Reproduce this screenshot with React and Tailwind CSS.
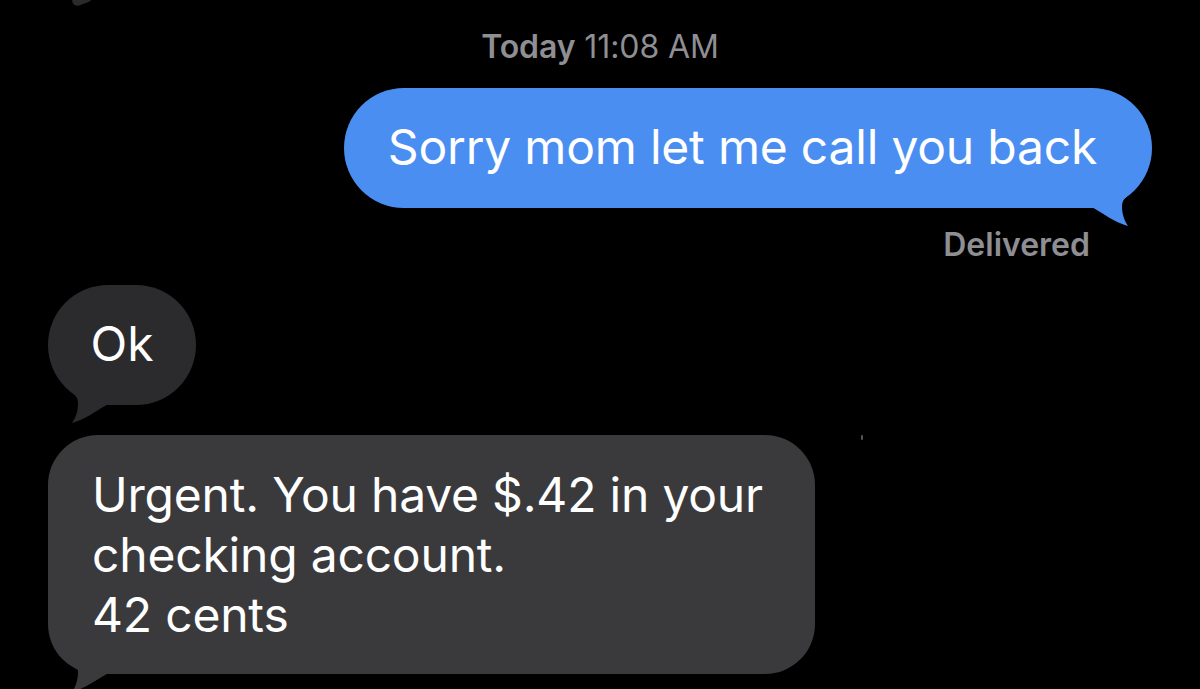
import React from "react";

// Bubble tail; drawn for the right side, mirrored for the left
function Tail({ color, side }) {
  const pos = side === "right" ? "right-[-4px] bottom-[-20px]" : "left-[-4px] bottom-[-20px] -scale-x-100";
  return (
    <svg
      className={`absolute ${pos}`}
      width="70"
      height="80"
      viewBox="0 0 70 80"
      aria-hidden="true"
    >
      <path
        d="M49 30 L49 40 C43 47 36 50 36 58 C36 66 38 72 42 78 C30 75 18 66 4 58 L0 30 Z"
        fill={color}
      />
    </svg>
  );
}

export default function App() {
  return (
    <div
      className="relative w-[1200px] h-[689px] overflow-hidden bg-black text-white"
      style={{ fontFamily: "Inter, 'Liberation Sans', sans-serif" }}
    >
      {/* edge of an earlier bubble peeking in at the top */}
      <div className="absolute left-[72px] top-[-6px] w-[20px] h-[10px] rounded-full bg-[#2a2a2c] rotate-[-20deg]" />
      <div className="absolute left-[861px] top-[435px] w-[2px] h-[5px] rounded-full bg-[#555]" />

      <div className="flex flex-col">
        <div className="pt-[28px] text-center text-[32px] leading-[38px] text-[#8e8e93] tracking-[-0.1px]">
          <span className="font-semibold">Today</span> 11:08 AM
        </div>

        <div className="flex justify-end pr-[48px] mt-[22px]">
          <div className="relative h-[120px] w-[808px] rounded-[60px] bg-[#4b8ef1] flex items-center justify-center">
            <Tail color="#4b8ef1" side="right" />
            <span className="relative text-[48px] leading-none tracking-[-0.2px] pb-[2px] pr-[11px]">
              Sorry mom let me call you back
            </span>
          </div>
        </div>

        <div className="flex justify-end pr-[110px] mt-[18px] text-[32px] leading-[38px] font-semibold text-[#8e8e93]">
          Delivered
        </div>

        <div className="pl-[48px] mt-[21px]">
          <div className="relative h-[120px] w-[148px] rounded-[60px] bg-[#2b2b2d] flex items-center justify-center">
            <Tail color="#2b2b2d" side="left" />
            <span className="relative text-[48px] leading-none pb-[2px]">Ok</span>
          </div>
        </div>

        <div className="pl-[48px] mt-[30px]">
          <div className="relative w-[767px] h-[239px] rounded-[50px] bg-[#3a3a3c] pl-[44px] pt-[30px]">
            <Tail color="#3a3a3c" side="left" />
            <p className="relative text-[48px] leading-[60px] tracking-[-0.2px]">
              Urgent. You have $.42 in your
              <br />
              checking account.
              <br />
              42 cents
            </p>
          </div>
        </div>
      </div>
    </div>
  );
}
